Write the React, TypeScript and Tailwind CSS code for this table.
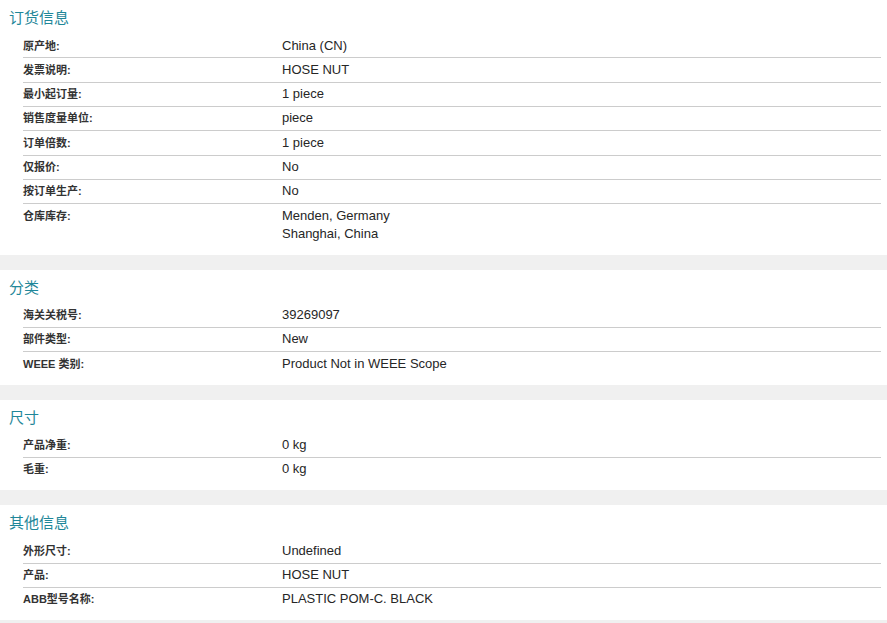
import React from 'react';

interface SpecRow {
  label: string;
  value: string[];
}

interface SpecSection {
  title: string;
  rows: SpecRow[];
}

const sections: SpecSection[] = [
  {
    title: '订货信息',
    rows: [
      { label: '原产地:', value: ['China (CN)'] },
      { label: '发票说明:', value: ['HOSE NUT'] },
      { label: '最小起订量:', value: ['1 piece'] },
      { label: '销售度量单位:', value: ['piece'] },
      { label: '订单倍数:', value: ['1 piece'] },
      { label: '仅报价:', value: ['No'] },
      { label: '按订单生产:', value: ['No'] },
      { label: '仓库库存:', value: ['Menden, Germany', 'Shanghai, China'] },
    ],
  },
  {
    title: '分类',
    rows: [
      { label: '海关关税号:', value: ['39269097'] },
      { label: '部件类型:', value: ['New'] },
      { label: 'WEEE 类别:', value: ['Product Not in WEEE Scope'] },
    ],
  },
  {
    title: '尺寸',
    rows: [
      { label: '产品净重:', value: ['0 kg'] },
      { label: '毛重:', value: ['0 kg'] },
    ],
  },
  {
    title: '其他信息',
    rows: [
      { label: '外形尺寸:', value: ['Undefined'] },
      { label: '产品:', value: ['HOSE NUT'] },
      { label: 'ABB型号名称:', value: ['PLASTIC POM-C. BLACK'] },
    ],
  },
];

export default function App() {
  return (
    <div
      className="min-h-screen w-[887px] bg-[#f0f0f0] flex flex-col gap-[15px]"
      style={{ fontFamily: '"Liberation Sans", Arial, "Noto Sans CJK SC", sans-serif' }}
    >
      {sections.map(section => (
        <div key={section.title} className="bg-white pb-[9px]">
          {/* Section title */}
          <div className="pl-[9px] pt-[8px] pb-[6px] h-[34px] text-[15px] leading-[20px] text-[#1f8799]">
            {section.title}
          </div>

          {/* Rows */}
          <div className="pl-[23px] pr-[6px]">
            {section.rows.map((row, i) => (
              <div
                key={row.label}
                className={
                  'flex pt-[2.5px] pb-[2.83px] leading-[18px] ' +
                  (i > 0 ? 'border-t border-[#cccccc]' : '')
                }
              >
                <div className="w-[259px] shrink-0 text-[11px] font-bold text-[#333333]">{row.label}</div>
                <div className="text-[13px] text-[#262626]">
                  {row.value.map(v => (
                    <div key={v}>{v}</div>
                  ))}
                </div>
              </div>
            ))}
          </div>
        </div>
      ))}
    </div>
  );
}
